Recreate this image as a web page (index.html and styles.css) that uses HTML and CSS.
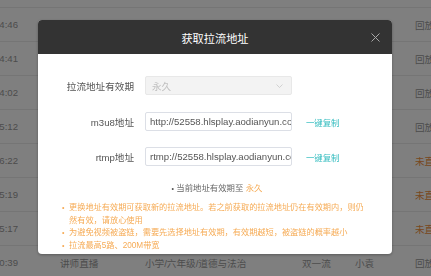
FILE: index.html
```html
<!DOCTYPE html>
<html lang="zh">
<head>
<meta charset="utf-8">
<link rel="stylesheet" href="styles.css">
</head>
<body>
<div class="table">
  <div class="row"><div class="c-time"><span>2021-06-18 12:10</span></div><div class="c-type">讲师直播</div><div class="c-course">小学/六年级/道德与法治</div><div class="c-school">双一流</div><div class="c-teacher">小袁</div><div class="c-status">回放</div></div>
  <div class="row"><div class="c-time"><span>2021-06-18 14:46</span></div><div class="c-type">讲师直播</div><div class="c-course">小学/六年级/道德与法治</div><div class="c-school">双一流</div><div class="c-teacher">小袁</div><div class="c-status">回放</div></div>
  <div class="row"><div class="c-time"><span>2021-06-18 14:41</span></div><div class="c-type">讲师直播</div><div class="c-course">小学/六年级/道德与法治</div><div class="c-school">双一流</div><div class="c-teacher">小袁</div><div class="c-status">回放</div></div>
  <div class="row"><div class="c-time"><span>2021-06-18 14:02</span></div><div class="c-type">讲师直播</div><div class="c-course">小学/六年级/道德与法治</div><div class="c-school">双一流</div><div class="c-teacher">小袁</div><div class="c-status">回放</div></div>
  <div class="row"><div class="c-time"><span>2021-06-17 15:12</span></div><div class="c-type">讲师直播</div><div class="c-course">小学/六年级/道德与法治</div><div class="c-school">双一流</div><div class="c-teacher">小袁</div><div class="c-status">回放</div></div>
  <div class="row"><div class="c-time"><span>2021-06-17 16:22</span></div><div class="c-type">讲师直播</div><div class="c-course">小学/六年级/道德与法治</div><div class="c-school">双一流</div><div class="c-teacher">小袁</div><div class="c-status warn">未直播</div></div>
  <div class="row"><div class="c-time"><span>2021-06-17 15:19</span></div><div class="c-type">讲师直播</div><div class="c-course">小学/六年级/道德与法治</div><div class="c-school">双一流</div><div class="c-teacher">小袁</div><div class="c-status warn">未直播</div></div>
  <div class="row"><div class="c-time"><span>2021-06-17 15:17</span></div><div class="c-type">讲师直播</div><div class="c-course">小学/六年级/道德与法治</div><div class="c-school">双一流</div><div class="c-teacher">小袁</div><div class="c-status warn">未直播</div></div>
  <div class="row"><div class="c-time"><span>2021-06-16 10:39</span></div><div class="c-type">讲师直播</div><div class="c-course">小学/六年级/道德与法治</div><div class="c-school">双一流</div><div class="c-teacher">小袁</div><div class="c-status">回放</div></div>
</div>

<div class="mask"></div>

<div class="dialog">
  <div class="dialog-header">
    <span class="dialog-title">获取拉流地址</span>
    <svg class="close" width="9" height="9" viewBox="0 0 9 9"><path d="M0.5 0.5L8.5 8.5M8.5 0.5L0.5 8.5" stroke="#a8a8a8" stroke-width="1" fill="none"/></svg>
  </div>
  <div class="dialog-body">
    <div class="form-row">
      <label class="label">拉流地址有效期</label>
      <div class="select">
        <span>永久</span>
        <svg class="chev" width="7" height="4" viewBox="0 0 7 4"><path d="M0.5 0.5L3.5 3.5L6.5 0.5" stroke="#c8c8c8" stroke-width="0.8" fill="none"/></svg>
      </div>
    </div>
    <div class="form-row">
      <label class="label">m3u8地址</label>
      <div class="input">http://52558.hlsplay.aodianyun.com/live/stream.m3u8</div>
      <a class="copy">一键复制</a>
    </div>
    <div class="form-row">
      <label class="label">rtmp地址</label>
      <div class="input">rtmp://52558.hlsplay.aodianyun.com/live/stream</div>
      <a class="copy">一键复制</a>
    </div>
    <div class="current"><span class="dot">•</span> 当前地址有效期至 <span class="orange">永久</span></div>
    <ul class="notes">
      <li>更换地址有效期可获取新的拉流地址。若之前获取的拉流地址仍在有效期内，则仍然有效，请放心使用</li>
      <li>为避免视频被盗链，需要先选择地址有效期，有效期越短，被盗链的概率越小</li>
      <li>拉流最高5路、200M带宽</li>
    </ul>
  </div>
</div>
</body>
</html>
```

FILE: styles.css
```css
* { box-sizing: border-box; }
html, body {
  margin: 0;
  padding: 0;
  width: 431px;
  height: 276px;
  overflow: hidden;
  background: #fff;
  font-family: "Liberation Sans", "Noto Sans CJK SC", sans-serif;
}
.table {
  margin-top: -26px;
}
.row {
  height: 34px;
  border-bottom: 1px solid #ebebeb;
  display: flex;
  align-items: center;
  font-size: 9.6px;
  color: #999;
  white-space: nowrap;
}
.row > div { flex-shrink: 0; }
.c-time {
  width: 18px;
  overflow: hidden;
  display: flex;
  justify-content: flex-end;
}
.c-time span { flex-shrink: 0; }
.c-type { margin-left: 42px; width: 85px; }
.c-course { width: 157px; }
.c-school { width: 53px; }
.c-teacher { width: 60px; }
.c-status.warn { color: #f0903c; }

.mask {
  position: fixed;
  inset: 0;
  background: rgba(0, 0, 0, 0.5);
}

.dialog {
  position: fixed;
  left: 38px;
  top: 20px;
  width: 354px;
  height: 234px;
  background: #fff;
  border-radius: 4px;
  overflow: hidden;
  box-shadow: 0 1px 3px rgba(0,0,0,0.3);
}
.dialog-header {
  height: 34px;
  background: #333;
  display: flex;
  align-items: center;
  justify-content: center;
  position: relative;
}
.dialog-title {
  color: #fff;
  font-size: 11.2px;
  padding-top: 1px;
}
.close {
  position: absolute;
  right: 12px;
  top: 13px;
}
.dialog-body {
  padding: 22px 0 0 0;
}
.form-row {
  display: grid;
  grid-template-columns: 96px 147px auto;
  column-gap: 11px;
  align-items: center;
  height: 19px;
  margin-bottom: 17px;
}
.form-row:nth-child(2) { margin-bottom: 16px; }
.form-row:nth-child(3) { margin-bottom: 0; }
.label {
  text-align: right;
  font-size: 9.6px;
  color: #555;
}
.select {
  height: 19px;
  background: #f3f3f3;
  border: 1px solid #e8e8e8;
  border-radius: 2px;
  display: flex;
  align-items: center;
  justify-content: space-between;
  padding: 0 8px 0 6px;
  font-size: 9.6px;
  color: #c0c0c0;
}
.input {
  height: 19px;
  border: 1px solid #dcdfe6;
  border-radius: 2px;
  display: flex;
  align-items: center;
  padding: 0 4px;
  font-size: 9.6px;
  color: #555;
  white-space: nowrap;
  overflow: hidden;
}
.copy {
  margin-left: 3px;
  font-size: 8.4px;
  color: #32bcbf;
}
.current {
  margin-top: 17px;
  text-align: center;
  font-size: 8.4px;
  color: #666;
  padding-left: 4px;
  line-height: 10px;
}
.dot { font-size: 7px; color: #555; }
.orange { color: #f6ab55; }
.notes {
  list-style: none;
  margin: 8px 0 0 0;
  padding: 0 22px 0 31px;
  font-size: 8.2px;
  line-height: 12.5px;
  color: #f6ab55;
}
.notes li { position: relative; }
.notes li::before {
  content: "•";
  position: absolute;
  left: -7px;
  top: 0;
  font-size: 7px;
}
```
